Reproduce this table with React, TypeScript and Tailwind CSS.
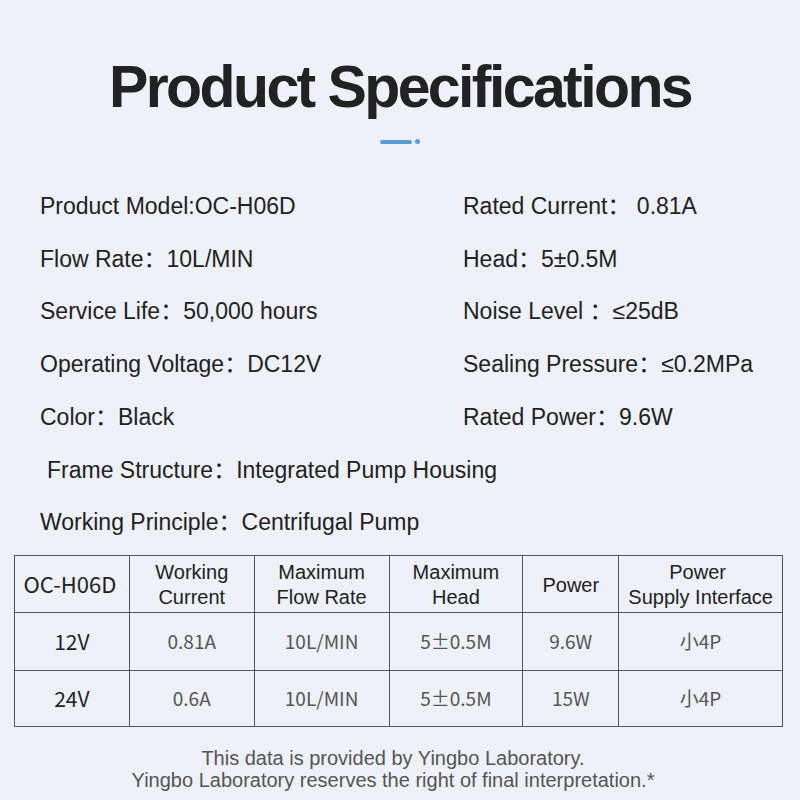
const specRows: [string, string][] = [
  ['Product Model:OC-H06D', 'Rated Current： 0.81A'],
  ['Flow Rate：10L/MIN', 'Head：5±0.5M'],
  ['Service Life：50,000 hours', 'Noise Level ：≤25dB'],
  ['Operating Voltage：DC12V', 'Sealing Pressure：≤0.2MPa'],
  ['Color：Black', 'Rated Power：9.6W'],
];

const headers = [
  ['OC-H06D'],
  ['Working', 'Current'],
  ['Maximum', 'Flow Rate'],
  ['Maximum', 'Head'],
  ['Power'],
  ['Power', 'Supply Interface'],
];

const rows = [
  ['12V', '0.81A', '10L/MIN', '5±0.5M', '9.6W', '小4P'],
  ['24V', '0.6A', '10L/MIN', '5±0.5M', '15W', '小4P'],
];

const colWidths = ['w-[115px]', 'w-[125px]', 'w-[135px]', 'w-[134px]', 'w-[96px]', 'w-[163px]'];

export default function App() {
  return (
    <div className="w-[800px] h-[800px] bg-[#eef1f9] text-[#222] font-['Liberation_Sans','Noto_Sans_CJK_SC',sans-serif] overflow-hidden">
      {/* Title */}
      <div className="pt-[58px] flex flex-col items-center">
        <h1 className="text-[59px] leading-[59px] font-bold tracking-[-2.6px] text-[#222]">
          Product Specifications
        </h1>
        <div className="mt-[22px] flex items-center gap-[3px]">
          <div className="w-[32px] h-[4px] rounded-full bg-[#5a9bd8]" />
          <div className="w-[5px] h-[5px] rounded-full bg-[#5a9bd8]" />
        </div>
      </div>

      {/* Spec list */}
      <div className="mt-[36px] pl-[40px] text-[23px] leading-[52.7px] text-[#222]">
        {specRows.map(([left, right], i) => (
          <div key={i} className="flex">
            <div className="w-[423px] whitespace-pre">{left}</div>
            <div className="whitespace-pre">{right}</div>
          </div>
        ))}
        <div className="pl-[7px]">Frame Structure：Integrated Pump Housing</div>
        <div>Working Principle：Centrifugal Pump</div>
      </div>

      {/* Table */}
      <div className="mt-[6px] ml-[14px] w-[769px] border border-[#555]">
        <div className="flex h-[57px] border-b border-[#555]">
          {headers.map((lines, i) => (
            <div
              key={i}
              className={`${colWidths[i]} flex flex-col items-center justify-center text-center ${
                i < 5 ? 'border-r border-[#555]' : ''
              } ${
                i === 0
                  ? "font-['Noto_Sans_CJK_SC',sans-serif] text-[22px] text-[#222] pr-[4px]"
                  : 'text-[20px] leading-[25px] text-[#222] pt-[3px]'
              }`}
            >
              {lines.map((l, j) => (
                <span key={j} className={i === 5 && j === 0 ? 'pr-[6px]' : ''}>
                  {l}
                </span>
              ))}
            </div>
          ))}
        </div>
        {rows.map((row, r) => (
          <div
            key={r}
            className={`flex ${r === 0 ? 'h-[58px] border-b border-[#555]' : 'h-[55px]'}`}
          >
            {row.map((cell, i) => (
              <div
                key={i}
                className={`${colWidths[i]} flex items-center justify-center font-['Noto_Sans_CJK_SC',sans-serif] ${
                  i < 5 ? 'border-r border-[#555]' : ''
                } ${i === 0 ? 'text-[21px] text-[#222]' : 'text-[19px] text-[#555]'}`}
              >
                {cell}
              </div>
            ))}
          </div>
        ))}
      </div>

      {/* Footer */}
      <div className="mt-[20px] pr-[14px] text-center text-[20px] leading-[22px] text-[#555]">
        <p>This data is provided by Yingbo Laboratory.</p>
        <p>Yingbo Laboratory reserves the right of final interpretation.*</p>
      </div>
    </div>
  );
}
